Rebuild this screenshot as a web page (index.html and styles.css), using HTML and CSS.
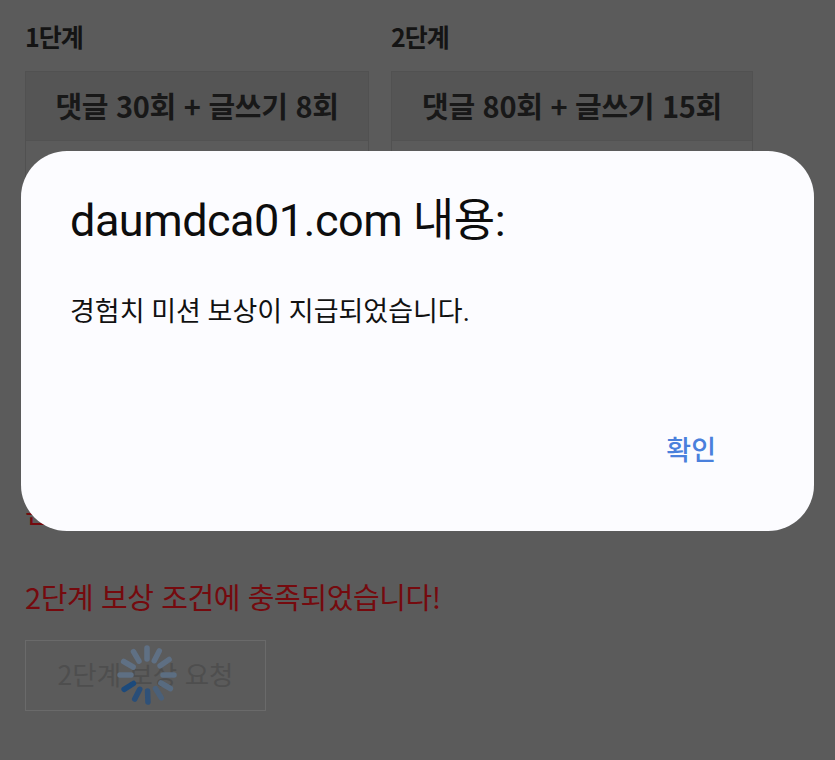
FILE: index.html
```html
<!DOCTYPE html>
<html lang="ko">
<head>
  <meta charset="UTF-8" />
  <meta name="viewport" content="width=device-width, initial-scale=1" />
  <title>경험치 미션</title>
  <link rel="stylesheet" href="styles.css">
</head>
<body>
  <div class="page">
    <div class="levels">
      <div class="level level-one">
        <h2>1단계</h2>
        <div class="card">
          <div class="card-head">댓글 30회 + 글쓰기 8회</div>
          <div class="card-body"></div>
        </div>
      </div>
      <div class="level level-two">
        <h2>2단계</h2>
        <div class="card">
          <div class="card-head">댓글 80회 + 글쓰기 15회</div>
          <div class="card-body"></div>
        </div>
      </div>
    </div>
    <p class="notice notice-first">완료되었습니다.</p>
    <p class="notice">2단계 보상 조건에 충족되었습니다!</p>
    <div class="request">
      <button class="request-btn">2단계 보상 요청</button>
      <svg class="spinner" viewBox="0 0 64 64" aria-hidden="true">
        <g fill="none" stroke-width="5.5" stroke-linecap="round">
          <line x1="32" y1="5" x2="32" y2="16" stroke="#5f7084" transform="rotate(0 32 32)"/>
          <line x1="32" y1="5" x2="32" y2="16" stroke="#5f7084" transform="rotate(27 32 32)"/>
          <line x1="32" y1="5" x2="32" y2="16" stroke="#5e6f83" transform="rotate(55 32 32)"/>
          <line x1="32" y1="5" x2="32" y2="16" stroke="#5c6e82" transform="rotate(90 32 32)"/>
          <line x1="32" y1="5" x2="32" y2="16" stroke="#586b80" transform="rotate(120 32 32)"/>
          <line x1="32" y1="5" x2="32" y2="16" stroke="#4a6079" transform="rotate(148 32 32)"/>
          <line x1="32" y1="5" x2="32" y2="16" stroke="#2f5178" transform="rotate(178 32 32)"/>
          <line x1="32" y1="5" x2="32" y2="16" stroke="#294e79" transform="rotate(207 32 32)"/>
          <line x1="32" y1="5" x2="32" y2="16" stroke="#1c4a7c" transform="rotate(238 32 32)"/>
          <line x1="32" y1="5" x2="32" y2="16" stroke="#5e6f83" transform="rotate(270 32 32)"/>
          <line x1="32" y1="5" x2="32" y2="16" stroke="#5f7084" transform="rotate(300 32 32)"/>
          <line x1="32" y1="5" x2="32" y2="16" stroke="#5f7084" transform="rotate(330 32 32)"/>
        </g>
      </svg>
    </div>
  </div>

  <div class="dialog">
    <h1>daumdca01.com 내용:</h1>
    <p>경험치 미션 보상이 지급되었습니다.</p>
    <div class="dialog-actions">
      <button class="ok-btn">확인</button>
    </div>
  </div>
</body>
</html>
```

FILE: styles.css
```css
html, body {
  height: 100%;
}
body {
  background-color: #5b5b5b;
  margin: 0;
  overflow: hidden;
  font-family: 'Noto Sans CJK KR', 'Noto Sans', sans-serif;
}
.page {
  padding: 20px 0 0 25px;
}
.levels {
  display: flex;
  gap: 22px;
}
.level-one {
  width: 344px;
}
.level-two {
  width: 362px;
}
h2 {
  margin: 0 0 19px;
  font-size: 25px;
  line-height: 32px;
  font-weight: 700;
  letter-spacing: -1px;
  color: #141414;
}
.card {
  border: 1px solid #515151;
  height: 348px;
  box-sizing: border-box;
}
.card-head {
  background-color: #555555;
  border-bottom: 1px solid #525252;
  height: 69px;
  padding-bottom: 3px;
  box-sizing: border-box;
  display: flex;
  align-items: center;
  justify-content: center;
  font-size: 29px;
  font-weight: 700;
  letter-spacing: -0.3px;
  color: #181818;
}
.notice {
  margin: 0;
  font-size: 29px;
  line-height: 36px;
  letter-spacing: -0.4px;
  color: #750a0e;
}
.notice-first {
  margin-top: 73px;
  margin-bottom: 50px;
}
.request {
  position: relative;
  width: 241px;
  margin-top: 26px;
}
.request-btn {
  display: block;
  width: 241px;
  height: 71px;
  background: transparent;
  border: 1px solid #6a6a6a;
  font-family: inherit;
  font-size: 26.5px;
  line-height: 1;
  color: #4e4e4e;
  padding: 0 0 3px;
}
.spinner {
  position: absolute;
  left: 90px;
  top: 3px;
  width: 64px;
  height: 64px;
}
.dialog {
  position: absolute;
  left: 21px;
  top: 151px;
  width: 793px;
  height: 380px;
  box-sizing: border-box;
  background-color: #fcfcff;
  border-radius: 46px;
  padding: 43px 49px 0;
  display: flex;
  flex-direction: column;
}
.dialog h1 {
  margin: 0;
  font-family: Roboto, 'Noto Sans CJK KR', sans-serif;
  font-size: 45px;
  line-height: 54px;
  font-weight: 400;
  letter-spacing: -0.5px;
  color: #0d0d0d;
}
.dialog p {
  margin: 46px 0 0;
  font-family: Roboto, 'Noto Sans CJK KR', sans-serif;
  font-size: 27px;
  line-height: 36px;
  color: #111111;
}
.dialog-actions {
  margin-top: auto;
  margin-bottom: 64px;
  padding-right: 49px;
  display: flex;
  justify-content: flex-end;
}
.ok-btn {
  background: none;
  border: none;
  padding: 0;
  font-family: 'Noto Sans CJK KR', sans-serif;
  font-size: 27px;
  line-height: 36px;
  font-weight: 500;
  color: #4a80dc;
}
```
